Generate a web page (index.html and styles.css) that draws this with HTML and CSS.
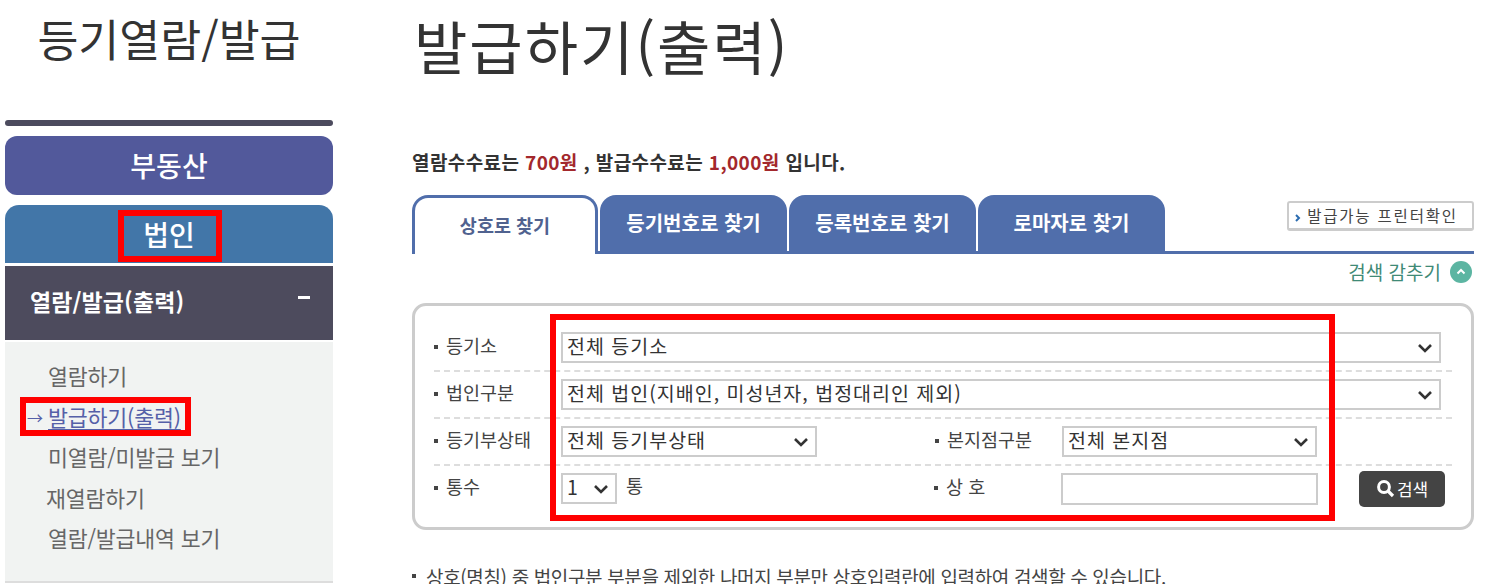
FILE: index.html
```html
<!DOCTYPE html>
<html lang="ko">
<head>
  <meta charset="UTF-8" />
  <title>발급하기(출력)</title>
  <link rel="stylesheet" href="styles.css">
</head>
<body>
  <div class="sidebar">
    <h2 class="side-title">등기열람/발급</h2>
    <div class="side-bar"></div>
    <a class="menu-btn estate">부동산</a>
    <a class="menu-btn corp"><span>법인</span><i class="mark mark-corp"></i></a>
    <div class="menu-head">열람/발급(출력)<span class="minus"></span></div>
    <ul class="menu-list">
      <li>열람하기</li>
      <li class="active"><span class="arrow">→</span>발급하기(출력)<i class="mark mark-issue"></i></li>
      <li>미열람/미발급 보기</li>
      <li class="shift">재열람하기</li>
      <li>열람/발급내역 보기</li>
    </ul>
  </div>

  <div class="main">
    <h1 class="page-title">발급하기(출력)</h1>
    <p class="fee">열람수수료는 <em>700원</em> , 발급수수료는 <em>1,000원</em> 입니다.</p>

    <div class="tabs">
      <a class="tab on">상호로 찾기</a>
      <a class="tab">등기번호로 찾기</a>
      <a class="tab">등록번호로 찾기</a>
      <a class="tab">로마자로 찾기</a>
      <a class="print-btn">
        <svg width="6" height="8" viewBox="0 0 6 8"><path d="M1 1l3 3-3 3" fill="none" stroke="#2b6cb0" stroke-width="2"/></svg>
        발급가능 프린터확인
      </a>
    </div>

    <div class="hide-row">검색 감추기
      <span class="hide-icon">
        <svg width="10" height="7" viewBox="0 0 10 7"><path d="M1.5 5.5 5 2l3.5 3.5" fill="none" stroke="#fff" stroke-width="2"/></svg>
      </span>
    </div>

    <div class="panel">
      <i class="mark mark-form"></i>
      <div class="row">
        <label class="lbl">등기소</label>
        <div class="sel sel-full">전체 등기소</div>
      </div>
      <div class="row">
        <label class="lbl">법인구분</label>
        <div class="sel sel-full">전체 법인(지배인, 미성년자, 법정대리인 제외)</div>
      </div>
      <div class="row">
        <label class="lbl">등기부상태</label>
        <div class="sel sel-half">전체 등기부상태</div>
        <label class="lbl lbl-2">본지점구분</label>
        <div class="sel sel-half2">전체 본지점</div>
      </div>
      <div class="row last">
        <label class="lbl">통수</label>
        <div class="sel sel-num">1</div>
        <span class="unit">통</span>
        <label class="lbl lbl-2b">상 호</label>
        <input class="inp" type="text">
        <button class="search-btn">
          <svg width="19" height="19" viewBox="0 0 19 19"><circle cx="8" cy="8" r="5.4" fill="none" stroke="#fff" stroke-width="3"/><path d="m12 12 5 5" stroke="#fff" stroke-width="3.2"/></svg>
          검색
        </button>
      </div>
    </div>

    <p class="note"><span class="dot"></span>상호(명칭) 중 법인구분 부분을 제외한 나머지 부분만 상호입력란에 입력하여 검색할 수 있습니다.</p>
  </div>
</body>
</html>
```

FILE: styles.css
```css
html, body { height: 100%; }

body {
  margin: 0;
  display: flex;
  height: 584px;
  overflow: hidden;
  background: #fff;
  color: #333;
  font-family: "Noto Sans CJK KR", "Noto Sans", sans-serif;
}

/* sidebar */
.sidebar { width: 328px; margin-left: 5px; flex: none; }
.side-title { margin: 0; height: 120px; padding-top: 8px; box-sizing: border-box; text-align: center; font-size: 44.5px; line-height: 60px; font-weight: 400; color: #333; }
.side-bar { height: 6px; background: #4c4b5e; border-radius: 3px; margin-bottom: 10px; }

.menu-btn { display: block; color: #fff; text-align: center; font-size: 28px; font-weight: 500; }
.estate { height: 59px; line-height: 59px; background: #52599b; border-radius: 12px; margin-bottom: 10px; }
.corp { position: relative; height: 58px; line-height: 58px; background: #4276a8; border-radius: 14px 14px 0 0; margin-bottom: 3px; }

.menu-head { display: flex; justify-content: space-between; align-items: center; height: 74px; padding: 0 23px 4px 25px; background: #4d4b5d; color: #fff; font-size: 23px; font-weight: 700; letter-spacing: 0.1px; box-sizing: border-box; }
.minus { width: 12px; height: 3px; background: #fff; margin-bottom: 8px; }

.menu-list { list-style: none; margin: 2px 0 0; padding: 14px 0 22px 43px; background: #f1f3f2; border-bottom: 2px solid #ddd; font-size: 21.7px; color: #666; }
.menu-list li { position: relative; height: 40.5px; line-height: 40px; letter-spacing: -0.2px; }
.menu-list .shift { margin-left: -2px; }
.menu-list .active { color: #5560a8; text-decoration: underline; text-underline-offset: 3px; }
.arrow { position: absolute; left: -21px; font-size: 16px; text-decoration: none; display: inline-block; }

/* main column */
.main { margin-left: 79px; width: 1062px; flex: none; }
.page-title { margin: 0; height: 148px; padding: 6px 0 0 2px; box-sizing: border-box; font-size: 58px; line-height: 78px; font-weight: 400; color: #333; letter-spacing: 2px; white-space: nowrap; }
.fee { margin: 0; height: 47px; line-height: 27px; font-size: 19px; font-weight: 700; color: #333; letter-spacing: 0.4px; white-space: nowrap; }
.fee em { font-style: normal; color: #a3282c; }

.tabs { display: flex; gap: 2px; align-items: flex-end; height: 59px; border-bottom: 3px solid #506eab; box-sizing: border-box; position: relative; }
.tab { width: 187px; height: 56px; line-height: 56px; text-align: center; background: #506eab; color: #fff; border-radius: 16px 16px 0 0; font-size: 20px; font-weight: 700; }
.tab.on { width: 186px; height: 59px; margin-bottom: -3px; box-sizing: border-box; line-height: 54px; background: #fff; color: #50628f; border: 3px solid #506eab; border-bottom: 0; font-size: 18.5px; }
.print-btn { position: absolute; right: 0; top: 6px; width: 187px; height: 30px; box-sizing: border-box; border: 2px solid #ccc; border-bottom-width: 3px; border-radius: 3px; background: #fff; font-size: 15.5px; line-height: 25px; padding-left: 6px; color: #444; letter-spacing: 1.8px; white-space: nowrap; }

.hide-row { display: flex; justify-content: flex-end; align-items: center; gap: 9px; height: 33px; padding-right: 2px; margin-top: 1px; color: #3f8a76; font-size: 19px; }
.hide-icon { width: 22px; height: 22px; border-radius: 50%; background: #5cb5a2; display: flex; align-items: center; justify-content: center; }

/* search panel */
.panel { position: relative; margin-top: 15px; height: 227px; box-sizing: border-box; padding: 19px 19px 0 19px; border: 3px solid #ccc; border-radius: 14px; }
.row { display: flex; align-items: center; height: 47px; box-sizing: border-box; border-bottom: 2px dashed #ddd; }
.row.last { border-bottom-color: transparent; }
.lbl { width: 127px; flex: none; margin-bottom: 5px; font-size: 18.5px; color: #444; padding-left: 12px; box-sizing: border-box; position: relative; }
.lbl::before { content: ""; position: absolute; left: 0; top: 50%; width: 4px; height: 4px; background: #444; }
.lbl-2 { width: 127px; margin-left: 118px; }
.lbl-2b { width: 127px; margin-left: 291px; }

.sel {
  height: 31px;
  box-sizing: border-box;
  border: 2px solid #ccc;
  background: #fff url("data:image/svg+xml,%3Csvg xmlns='http://www.w3.org/2000/svg' width='16' height='10'%3E%3Cpath d='M2 2l6 6 6-6' fill='none' stroke='%23333' stroke-width='2.6'/%3E%3C/svg%3E") no-repeat right 6px center;
  font-size: 19.5px;
  line-height: 23px;
  color: #333;
  padding-left: 4px;
  letter-spacing: 1px;
  white-space: nowrap;
}
.sel-full { width: 880px; }
.sel-half { width: 256px; }
.sel-half2 { width: 255px; }
.sel-num { width: 56px; }
.unit { margin: 0 0 7px 9px; font-size: 18.5px; color: #444; }
.inp { width: 257px; height: 32px; box-sizing: border-box; border: 2px solid #ccc; background: #fff; }
.search-btn { display: flex; align-items: center; justify-content: center; gap: 2px; margin-left: 41px; width: 86px; height: 36px; border: 0; border-radius: 5px; background: #444; color: #fff; font-family: inherit; font-size: 17px; padding: 0; }

.note { margin: 33px 0 0; padding-left: 14px; position: relative; font-size: 19px; line-height: 27px; color: #444; white-space: nowrap; letter-spacing: -0.35px; }
.dot { position: absolute; left: 0; top: 11px; width: 4px; height: 4px; background: #444; }

/* red annotation frames */
.mark { position: absolute; border: 6px solid #f00; box-sizing: border-box; pointer-events: none; }
.mark-corp { left: 113px; top: 5px; width: 104px; height: 52px; }
.mark-issue { left: -28px; top: 0; width: 171px; height: 39px; }
.mark-form { left: 135px; top: 8px; width: 785px; height: 207px; }
```
